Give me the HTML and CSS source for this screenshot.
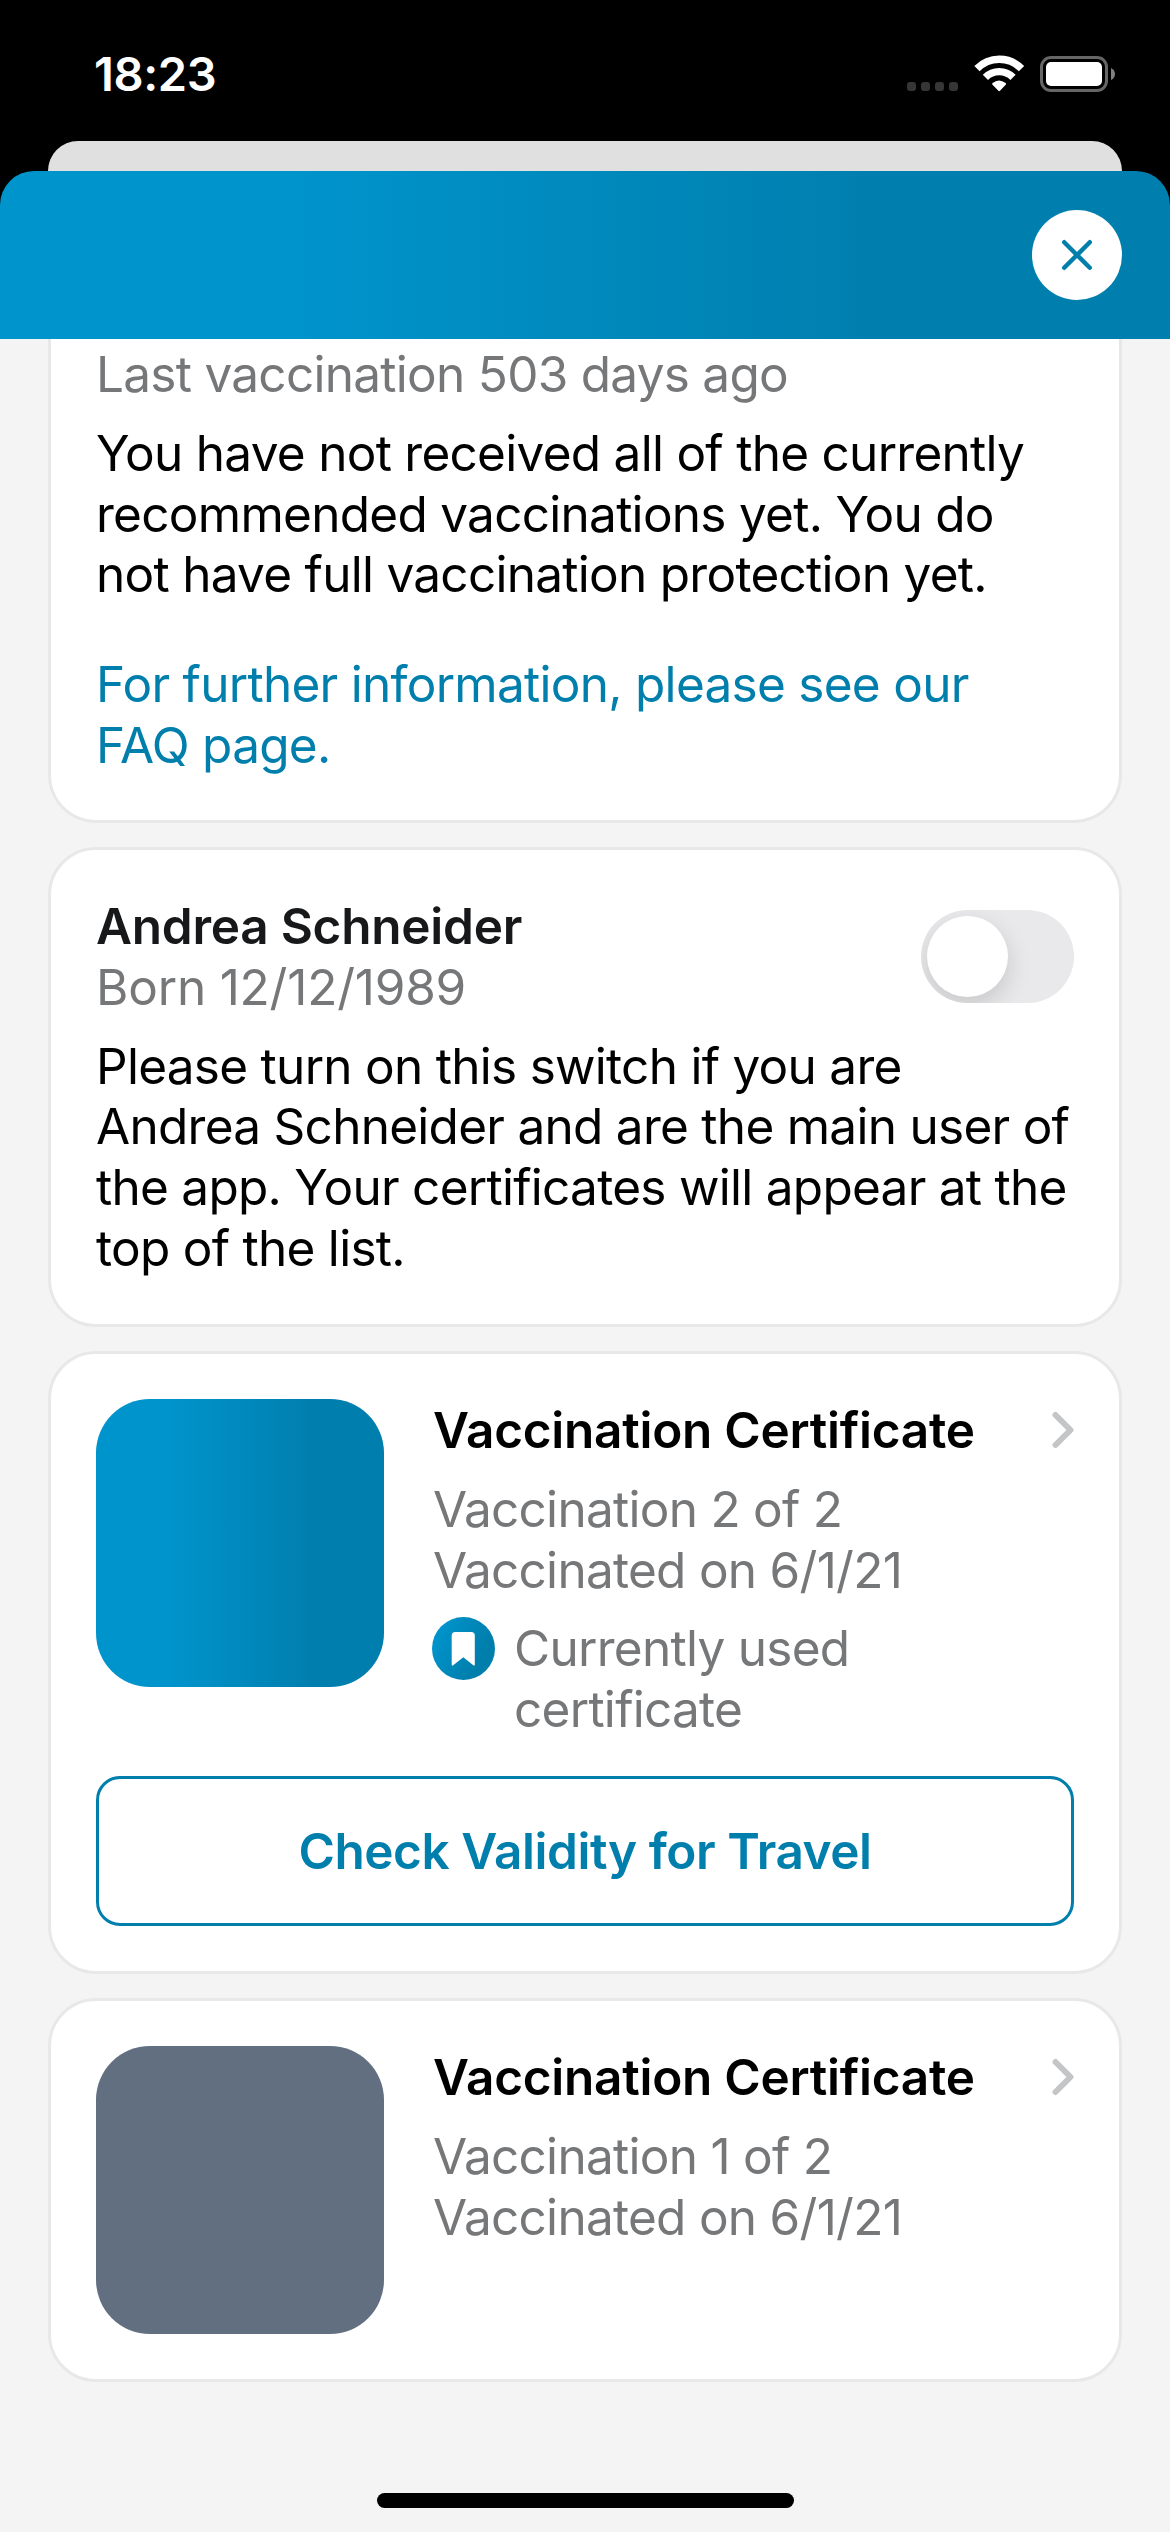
FILE: index.html
```html
<!DOCTYPE html>
<html lang="en"><head><meta charset="utf-8"><title>Certificates</title><link rel="stylesheet" href="styles.css"></head>
<body>
<header class="status"><span class="time">18:23</span>
<svg class="indicators" width="210" height="40" viewBox="0 0 210 40"><g fill="#363636"><rect x="1" y="26" width="9" height="9" rx="3"/><rect x="15" y="26" width="9" height="9" rx="3"/><rect x="29" y="26" width="9" height="9" rx="3"/><rect x="43" y="26" width="9" height="9" rx="3"/></g>
<g fill="none" stroke="#fff" stroke-width="7.4"><path d="M71 12.700A31 31 0 0 1 115.500 12.700"/><path d="M79.400 21.300A19.500 19.500 0 0 1 107 21.300"/></g><path d="M86.300 28.500Q85.800 27.700 86.600 27Q93 21.800 99.600 27Q100.500 27.700 99.900 28.500L94 34.800Q93.200 35.600 92.400 34.800Z" fill="#fff"/>
<rect x="135.500" y="1.500" width="65" height="33" rx="9.500" fill="none" stroke="#666" stroke-width="3"/><rect x="140" y="6" width="56" height="24" rx="5" fill="#fff"/><path d="M205 12q4 2 4 6t-4 6z" fill="#808080"/></svg></header>
<div class="backsheet"></div>
<main class="sheet">
<div class="bar"><button class="close" aria-label="Close"><svg width="34" height="34" viewBox="0 0 34 34"><path d="M4.200 4.200L29.800 29.800M29.800 4.200L4.200 29.800" stroke="#007fad" stroke-width="4.400" stroke-linecap="round"/></svg></button></div>
<div class="content">
<section class="card first"><p class="muted">Last vaccination 503 days ago</p>
<p class="body">You have not received all of the currently<br>recommended vaccinations yet. You do<br>not have full vaccination protection yet.</p>
<a class="faq">For further information, please see our<br>FAQ page.</a></section>
<section class="card person"><div class="row"><div><h2>Andrea Schneider</h2><p class="muted born">Born 12/12/1989</p></div><div class="switch"><div class="knob"></div></div></div>
<p class="body">Please turn on this switch if you are<br>Andrea Schneider and are the main user of<br>the app. Your certificates will appear at the<br>top of the list.</p></section>
<section class="card current"><div class="cert"><div class="tile blue"></div><div class="info"><h2>Vaccination Certificate</h2><p class="muted">Vaccination 2 of 2<br>Vaccinated on 6/1/21</p>
<div class="used"><svg class="badge" width="63" height="63" viewBox="0 0 63 63"><defs><linearGradient id="g" x1="0" y1="0" x2="1" y2=".5"><stop offset=".15" stop-color="#0094cc"/><stop offset=".85" stop-color="#007fad"/></linearGradient></defs><circle cx="31.500" cy="31.500" r="31.500" fill="url(#g)"/><path d="M19.700 18.500q0-3.500 3.500-3.500h16.100q3.500 0 3.500 3.500v29q0 2-1.800.5L31.300 40.300 21.500 48q-1.800 1.500-1.800-.5z" fill="#fff"/></svg><p class="muted">Currently used<br>certificate</p></div></div>
<svg class="chev" width="24" height="38" viewBox="0 0 24 38"><path d="M5.500 4L20.500 19L5.500 34" fill="none" stroke="#c4c5c6" stroke-width="6" stroke-linecap="round" stroke-linejoin="round"/></svg></div><button class="travel">Check Validity for Travel</button></section>
<section class="card older"><div class="cert"><div class="tile slate"></div><div class="info"><h2>Vaccination Certificate</h2><p class="muted">Vaccination 1 of 2<br>Vaccinated on 6/1/21</p></div>
<svg class="chev" width="24" height="38" viewBox="0 0 24 38"><path d="M5.500 4L20.500 19L5.500 34" fill="none" stroke="#c4c5c6" stroke-width="6" stroke-linecap="round" stroke-linejoin="round"/></svg></div></section>
</div><div class="home"></div></main></body></html>
```
FILE: styles.css
```css
*{box-sizing:border-box}
body{margin:0;width:1170px;height:2532px;background:#000;font-family:Inter,"Liberation Sans",sans-serif;font-size:49.5px;line-height:60.75px;letter-spacing:-.72px;color:#000;overflow:hidden;white-space:nowrap}
p,h2{margin:0}
h2{font-size:49.5px;font-weight:600;letter-spacing:-.25px}
button{font:inherit}
.status{height:141px;padding:55px 54px 0 94px;display:flex;justify-content:space-between;align-items:flex-start}
.indicators{margin-top:1px;overflow:visible}
.time{color:#fff;font-weight:600;line-height:38px;font-size:47px;letter-spacing:-.4px}
.backsheet{height:30px;margin:0 48px;background:#e0e0e0;border-radius:30px 30px 0 0}
.sheet{height:2361px;background:linear-gradient(#000 60px,#f4f4f4 60px);display:flex;flex-direction:column;align-items:center}
.bar{width:1170px;height:168px;background:linear-gradient(90deg,#0094cc 25%,#007fae 75%);border-radius:34px 34px 0 0;padding:39px 48px;display:flex;justify-content:flex-end}
.sheet{border-radius:34px 34px 0 0}
.close{width:90px;height:90px;border:0;border-radius:50%;background:#fff;padding:0;display:flex;align-items:center;justify-content:center}
.content{width:1074px;flex:1}
.card{background:#fff;border:3px solid #e8e8e8;border-radius:48px;padding:45px;margin-bottom:24px}
.first{height:484px;border-top:0;border-radius:0 0 48px 48px;padding-top:5px}
.muted{color:#767779}
.born{letter-spacing:-.2px}
.body{margin-top:18px}
.faq{display:block;margin-top:49px;color:#007fad}
.person{height:480px;padding-top:46px}
.person h2{color:#17181a}
.row,.cert{display:flex;justify-content:space-between}
.switch{width:153px;height:93px;border-radius:47px;background:#e9e9eb;padding:6px;margin-top:14px;overflow:hidden}
.knob{width:81px;height:81px;border-radius:50%;background:#fff;box-shadow:0 9px 24px #00000026}
.current{height:623px}
.current .cert{height:341px}
.older{height:384px}
.tile{width:288px;height:288px;border-radius:54px}
.blue{background:linear-gradient(90deg,#0094cc 25%,#007fae 75%)}
.slate{background:#616f80}
.info{margin-left:49px;padding-top:1px;flex:1}
.info .muted{margin-top:18px}
.used{display:flex;margin-top:17px;gap:19px;align-items:flex-start}
.used .muted{margin-top:1px}
.badge{margin-left:-1px}
.chev{margin-top:12px}
.travel{display:block;width:978px;height:150px;margin-top:36px;padding:1px 0 0;border:3px solid #007fad;border-radius:24px;background:#fff;color:#007fad;font-weight:600;letter-spacing:-.45px}
.home{width:417px;height:15px;border-radius:8px;background:#000;margin-bottom:24px}
```
